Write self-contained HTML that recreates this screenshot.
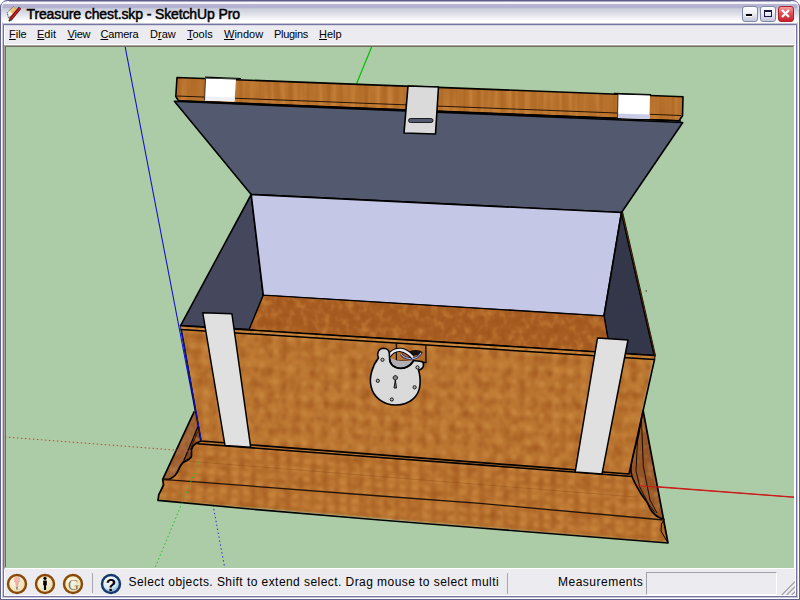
<!DOCTYPE html>
<html><head><meta charset="utf-8">
<style>
html,body{margin:0;padding:0;width:800px;height:600px;overflow:hidden;background:#ffffff;}
*{box-sizing:border-box;}
.a{position:absolute;}
#win{position:absolute;left:0;top:0;width:800px;height:600px;background:#ebebf0;border-radius:8px 8px 0 0;overflow:hidden;}
#title{position:absolute;left:0;top:0;width:800px;height:24px;background:linear-gradient(to bottom,#5e5d8c 0px,#5e5d8c 1px,#a8a7c4 1px,#a8a7c4 2px,#ffffff 2px,#f2f2f7 3px,#f2f2f7 3.5px,#b8b6d3 4px,#b4b2d1 7.5px,#c6c8d8 8.5px,#ccd0dc 9.5px,#e0e1e9 14px,#f6f6f9 19px,#ffffff 21px,#ffffff 23px,#c4c3d6 23px,#c4c3d6 24px);}
#ttext{position:absolute;left:26.5px;top:6px;font:14px "Liberation Sans",sans-serif;color:#000;letter-spacing:-0.12px;-webkit-text-stroke:0.5px #000;white-space:nowrap;}
.btn{position:absolute;top:6px;width:16px;height:16px;border:1px solid #7e88aa;border-radius:3px;
 background:linear-gradient(to bottom,#ffffff 0%,#f0f0f6 40%,#c6c6dc 100%);}
#menu{position:absolute;left:0;top:24px;width:800px;height:21px;}
.mi{position:absolute;top:5px;font:11px "Liberation Sans",sans-serif;color:#000;white-space:nowrap;}
.mi u{text-decoration:underline;text-underline-offset:1px;text-decoration-thickness:1px;}
#status{position:absolute;left:0;top:568px;width:800px;height:32px;}
</style></head>
<body>
<div id="win">
 <div id="title"></div>
 <!-- icon -->
 <svg class="a" style="left:4px;top:3px" width="20" height="20" viewBox="0 0 20 20">
  <path d="M9.5,3.5 L12.5,6.8 L8.8,11.5 L4.5,15 L3.2,9.5 Z" fill="#f2f2f2" stroke="#222" stroke-width="0.8" stroke-dasharray="1 0.6"/>
  <path d="M9.5,3.5 L12.5,6.8 L8.8,11.5 L6.2,8.2 Z" fill="#f4b868"/>
  <path d="M16,4.8 L6.2,16.8" stroke="#202020" stroke-width="3.2"/>
  <path d="M16,4.8 L6.2,16.8" stroke="#ee1010" stroke-width="1.8"/>
  <path d="M6.6,16.3 L5,18.2" stroke="#403020" stroke-width="2"/>
 </svg>
 <div id="ttext">Treasure chest.skp - SketchUp Pro</div>
 <div class="btn" style="left:742px"><div class="a" style="left:3px;top:7px;width:6px;height:2px;background:#000"></div><div class="a" style="left:3px;top:9px;width:6px;height:1px;background:#fff"></div></div>
 <div class="btn" style="left:760px"><div class="a" style="left:3px;top:3px;width:8px;height:7px;border:1px solid #1a1a40;border-top-width:2px;"></div></div>
 <div class="btn" style="left:778px;border-color:#b02028;background:linear-gradient(to bottom,#f4a0a0 0%,#e05058 45%,#c8202c 100%)">
  <svg class="a" style="left:0px;top:0px" width="14" height="14" viewBox="0 0 14 14"><path d="M3 3 L10 10 M10 3 L3 10" stroke="#fff" stroke-width="2.2"/></svg>
 </div>
 <svg class="a" style="left:0;top:0" width="800" height="12" viewBox="0 0 800 12">
  <path d="M0.5,8 Q0.5,0.5 8,0.5" fill="none" stroke="#6a6994" stroke-width="1"/>
  <path d="M1.5,9 Q1.5,1.5 9,1.5" fill="none" stroke="#f4f4f8" stroke-width="1"/>
  <path d="M799.5,8 Q799.5,0.5 792,0.5" fill="none" stroke="#6a6994" stroke-width="1"/>
  <path d="M798.5,9 Q798.5,1.5 791,1.5" fill="none" stroke="#f4f4f8" stroke-width="1"/>
 </svg>
 <!-- frame lines -->
 <div class="a" style="left:0;top:24px;width:800px;height:1px;background:#7574a2"></div>
 <div class="a" style="left:0;top:25px;width:800px;height:1px;background:#d6d6e4"></div>
 <div class="a" style="left:0;top:0;width:1px;height:600px;background:#62608e"></div>
 <div class="a" style="left:1px;top:22px;width:1px;height:578px;background:#fff"></div>
 <div class="a" style="left:2px;top:22px;width:1px;height:578px;background:#c8c8dc"></div>
 <div class="a" style="left:3px;top:24px;width:1px;height:576px;background:#7372a0"></div>
 <div class="a" style="left:4px;top:25px;width:1px;height:571px;background:#fff"></div>
 <div class="a" style="left:799px;top:0;width:1px;height:600px;background:#62608e"></div>
 <div class="a" style="left:798px;top:22px;width:1px;height:578px;background:#fff"></div>
 <div class="a" style="left:797px;top:22px;width:1px;height:578px;background:#c8c8dc"></div>
 <div class="a" style="left:796px;top:24px;width:1px;height:576px;background:#7372a0"></div>
 <div class="a" style="left:795px;top:25px;width:1px;height:571px;background:#fff"></div>
 <div class="a" style="left:0;top:599px;width:800px;height:1px;background:#62608e"></div>
 <div class="a" style="left:1px;top:598px;width:798px;height:1px;background:#fff"></div>
 <div class="a" style="left:2px;top:597px;width:796px;height:1px;background:#c8c8dc"></div>
 <div class="a" style="left:3px;top:596px;width:794px;height:1px;background:#7372a0"></div>
 <div class="a" style="left:4px;top:595px;width:792px;height:1px;background:#fff"></div>

 <!-- menu -->
 <div class="mi" style="left:9px;top:28px"><u>F</u>ile</div>
 <div class="mi" style="left:37px;top:28px"><u>E</u>dit</div>
 <div class="mi" style="left:67.5px;top:28px;letter-spacing:-0.2px"><u>V</u>iew</div>
 <div class="mi" style="left:100.5px;top:28px;letter-spacing:-0.2px"><u>C</u>amera</div>
 <div class="mi" style="left:150px;top:28px">D<u>r</u>aw</div>
 <div class="mi" style="left:187px;top:28px"><u>T</u>ools</div>
 <div class="mi" style="left:224px;top:28px"><u>W</u>indow</div>
 <div class="mi" style="left:274px;top:28px;letter-spacing:-0.3px">Plugins</div>
 <div class="mi" style="left:319px;top:28px"><u>H</u>elp</div>
 <div class="a" style="left:5px;top:44px;width:790px;height:1px;background:#fff"></div>

 <!-- canvas -->
 <div class="a" style="left:4px;top:45px;width:791px;height:524px;background:#fff;border-top:1px solid #a8a49c;border-left:1px solid #a8a49c;border-right:1px solid #fff;border-bottom:1px solid #fff;"></div>
 <div class="a" style="left:5px;top:46px;width:789px;height:522px;border-top:1px solid #736e62;border-left:1px solid #736e62;border-right:1px solid #f0f0f0;border-bottom:1px solid #f0f0f0;"></div>
 <svg class="a" style="left:0;top:0" width="800" height="600" viewBox="0 0 800 600">
  <defs>
   <clipPath id="cv"><rect x="6" y="47" width="788" height="521"/></clipPath>
   <filter id="tx" filterUnits="userSpaceOnUse" x="0" y="0" width="800" height="600" color-interpolation-filters="sRGB">
    <feTurbulence type="fractalNoise" baseFrequency="0.13 0.11" numOctaves="2" seed="7" result="n"/>
    <feColorMatrix in="n" type="matrix" values="0 0 0 0 0.60  0 0 0 0 0.30  0 0 0 0 0.08  -1.6 0 0 0 0.82" result="dk"/>
    <feColorMatrix in="n" type="matrix" values="0 0 0 0 0.82  0 0 0 0 0.55  0 0 0 0 0.25  1.6 0 0 0 -0.80" result="lt"/>
    <feMerge result="m"><feMergeNode in="SourceGraphic"/><feMergeNode in="dk"/><feMergeNode in="lt"/></feMerge>
    <feGaussianBlur in="m" stdDeviation="0.6" result="b"/>
    <feComposite in="b" in2="SourceAlpha" operator="in"/>
   </filter>
   <pattern id="pw" patternUnits="userSpaceOnUse" width="14" height="15" patternTransform="skewY(3.8)">
    <rect width="14" height="15" fill="#b9742f"/>
    <ellipse cx="4" cy="8" rx="2.6" ry="3.5" fill="#a85c24" opacity="0.55"/>
    <ellipse cx="10.5" cy="3" rx="2.6" ry="3.2" fill="#cc8e46" opacity="0.55"/>
    <ellipse cx="10.5" cy="18" rx="2.6" ry="3.2" fill="#cc8e46" opacity="0.55"/>
    <rect x="7" y="0" width="1.4" height="15" fill="#c6883e" opacity="0.35"/>
   </pattern>
   <pattern id="pb" patternUnits="userSpaceOnUse" width="12" height="9" patternTransform="skewY(4.6)">
    <rect width="12" height="9" fill="#b8722e"/>
    <rect x="0" y="0" width="2" height="9" fill="#a45c26" opacity="0.45"/>
    <ellipse cx="7" cy="4.5" rx="3" ry="2.6" fill="#cc8c44" opacity="0.55"/>
    <rect x="0" y="8" width="12" height="1" fill="#a86024" opacity="0.3"/>
   </pattern>
   <filter id="soft" x="-2%" y="-2%" width="104%" height="104%"><feGaussianBlur stdDeviation="0.9"/><feComposite in2="SourceAlpha" operator="in"/></filter>
   <filter id="tx2" filterUnits="userSpaceOnUse" x="0" y="0" width="800" height="600" color-interpolation-filters="sRGB">
    <feTurbulence type="fractalNoise" baseFrequency="0.1 0.09" numOctaves="2" seed="5" result="n"/>
    <feColorMatrix in="n" type="matrix" values="0 0 0 0 0.60  0 0 0 0 0.30  0 0 0 0 0.08  -1.4 0 0 0 0.72" result="dk"/>
    <feColorMatrix in="n" type="matrix" values="0 0 0 0 0.82  0 0 0 0 0.55  0 0 0 0 0.25  1.4 0 0 0 -0.70" result="lt"/>
    <feMerge result="m"><feMergeNode in="SourceGraphic"/><feMergeNode in="dk"/><feMergeNode in="lt"/></feMerge>
    <feGaussianBlur in="m" stdDeviation="1.1" result="b"/>
    <feComposite in="b" in2="SourceAlpha" operator="in"/>
   </filter>
   <filter id="bg" filterUnits="userSpaceOnUse" x="0" y="0" width="800" height="600" color-interpolation-filters="sRGB">
    <feTurbulence type="fractalNoise" baseFrequency="0.13 0.04" numOctaves="2" seed="11" result="n"/>
    <feColorMatrix in="n" type="matrix" values="0 0 0 0 0.62  0 0 0 0 0.32  0 0 0 0 0.08  -1.6 0 0 0 0.82" result="dk"/>
    <feColorMatrix in="n" type="matrix" values="0 0 0 0 0.84  0 0 0 0 0.56  0 0 0 0 0.26  1.6 0 0 0 -0.80" result="lt"/>
    <feMerge result="m"><feMergeNode in="SourceGraphic"/><feMergeNode in="dk"/><feMergeNode in="lt"/></feMerge>
    <feGaussianBlur in="m" stdDeviation="0.7" result="b"/>
    <feComposite in="b" in2="SourceAlpha" operator="in"/>
   </filter>
   <filter id="gr" filterUnits="userSpaceOnUse" x="0" y="0" width="800" height="600" color-interpolation-filters="sRGB">
    <feTurbulence type="fractalNoise" baseFrequency="0.16 0.01" numOctaves="2" seed="3" result="n"/>
    <feColorMatrix in="n" type="matrix" values="0 0 0 0 0.66  0 0 0 0 0.36  0 0 0 0 0.10  -1.8 0 0 0 0.9" result="dk"/>
    <feColorMatrix in="n" type="matrix" values="0 0 0 0 0.86  0 0 0 0 0.58  0 0 0 0 0.28  1.8 0 0 0 -0.9" result="lt"/>
    <feMerge result="m"><feMergeNode in="SourceGraphic"/><feMergeNode in="dk"/><feMergeNode in="lt"/></feMerge>
    <feGaussianBlur in="m" stdDeviation="0.6" result="b"/>
    <feComposite in="b" in2="SourceAlpha" operator="in"/>
   </filter>
  </defs>
  <g clip-path="url(#cv)">
   <rect x="6" y="47" width="788" height="521" fill="#abcca6"/>
      <!-- axes behind model -->
   <line x1="125" y1="46" x2="203" y2="452" stroke="#1010c8" stroke-width="1.05"/>
   <line x1="372" y1="46" x2="356" y2="85" stroke="#00c000" stroke-width="1.2"/>
   <line x1="5" y1="437" x2="200" y2="452" stroke="#d04030" stroke-width="1" stroke-dasharray="1.5 2.5"/>
   <line x1="213" y1="505" x2="227" y2="580" stroke="#3030d0" stroke-width="1" stroke-dasharray="1.5 2.5"/>
   <line x1="637" y1="485" x2="800" y2="497.5" stroke="#cc1818" stroke-width="1"/>
   <!-- base fills -->
   <polygon filter="url(#tx2)" points="194.3,411.3 643,410 668,543 158,500.4 162.7,479.3" fill="url(#pb)"/>
   <polygon filter="url(#tx)" points="194.3,411.3 196.5,411.3 198,426.6 183.7,461 176,473.5 169.4,479.3 162.7,479.3" fill="#a0643a"/>
   <polygon filter="url(#tx)" points="196.5,411.3 201,441 193.3,446 190.5,450.6 191.4,456.3 186.6,461 181.8,464 179,469 176,473.5 183.7,461 198,426.6" fill="#7e4822"/>
   <polygon filter="url(#tx)" points="643,410 668,543 662.5,527.5 664.3,519.6 656,517.2 649,508 648,501 641,494 637.5,484.6 631.7,474 630.5,463.6 637.5,440.3" fill="#94562a"/>
   <!-- base lines -->
   <polyline points="198,426.6 183.7,461 176,473.5" fill="none" stroke="#000" stroke-width="1.2"/>
   <polyline points="197.5,432 190,450" fill="none" stroke="#1a0e04" stroke-width="0.8"/>
   <path d="M201,441 C197,443 193.5,444.5 192.5,447 C190.5,450 192,453.5 191.4,456.3 C190,459.5 187,460.5 184,462 C180.5,464 179.5,467 178.5,470 C177,474 173,477.5 169.4,479.3 L162.7,479.3" fill="none" stroke="#000" stroke-width="1.7"/>
   <path d="M643,410 L637.5,440 C633,452 630,462 631,472 C632,480 637,486 640,492 C643,498 647,500 649,506 C651,512 656,517 664.3,519.6" fill="none" stroke="#000" stroke-width="1.7"/>
   <polyline points="637.5,440.3 636,470.6 639.8,487 648,503 655,512.6" fill="none" stroke="#1a0e04" stroke-width="1"/>
   <polyline points="641.5,420 643.3,466 650,500 657,513" fill="none" stroke="#1a0e04" stroke-width="1"/>
   <polyline points="664.3,519.6 661.5,524 661,531 668,543" fill="none" stroke="#000" stroke-width="1"/>
   <polyline points="194.3,411.3 162.7,479.3 163.6,485 158.8,494.6 158,500.4 250,509 380,520 480,528 668,543 643,410" fill="none" stroke="#000" stroke-width="1.7" stroke-linejoin="round"/>
   <polyline points="162.7,479.3 380,496 480,503.4 664,520" fill="none" stroke="#241408" stroke-width="1.3"/>
   <line x1="186" y1="461" x2="636" y2="497" stroke="#8a4a18" stroke-width="0.8" opacity="0.5"/>
   <!-- front wall -->
   <polygon filter="url(#tx2)" points="180.6,325.6 654.5,355.5 629,474 201,441" fill="url(#pw)"/>
   <polygon points="180.6,325.6 654.5,355.5 654.5,359.5 629,474 201,441" fill="none" stroke="#000" stroke-width="1.6" stroke-linejoin="round"/>
   <polyline points="197.3,443.7 380,457.5 480,464.9 632,476.5" fill="none" stroke="#000" stroke-width="1.6"/>
   <line x1="180.6" y1="327" x2="201.3" y2="441" stroke="#1010c8" stroke-width="1.05"/>
   <!-- axes dotted on top -->
   <line x1="175" y1="450" x2="190" y2="451.2" stroke="#d04030" stroke-width="1" stroke-dasharray="1.5 2.5"/>
   <line x1="199" y1="462" x2="150" y2="580" stroke="#20c020" stroke-width="1" stroke-dasharray="1.5 2.5"/>
   <line x1="637.5" y1="485.6" x2="800" y2="497.8" stroke="#cc1818" stroke-width="1"/>
   <rect x="645.5" y="290.5" width="1.5" height="1" fill="#203020"/>
   <!-- lid underside -->
   <polygon points="174.4,101.25 682.75,122.5 621.5,212.5 251.2,194.5" fill="#535a70" stroke="#000" stroke-width="1.6" stroke-linejoin="round"/>
   <!-- lid wood edge -->
   <polygon filter="url(#gr)" points="177,77.5 683,96.7 682.5,115.8 679,120.8 178.5,100.8 175.8,96.5" fill="#b6712d"/>
   <polygon filter="url(#gr)" points="175.8,96.3 682.5,115.8 679,120.8 178.5,100.8" fill="#bc762e"/>
   <polygon points="177,77.5 683,96.7 682.5,115.8 679,120.8 178.5,100.8 175.8,96.5" fill="none" stroke="#000" stroke-width="1.6" stroke-linejoin="round"/>
   <line x1="177" y1="96" x2="681" y2="115.5" stroke="#2a1606" stroke-width="1"/>
   <line x1="178" y1="101" x2="681" y2="121" stroke="#000" stroke-width="1.6"/>
   <!-- hinges -->
   <polygon points="205.5,78.5 236,79.5 234.5,101.5 204.5,100.5" fill="#ffffff"/>
   <polygon points="204.8,96.5 235,97.5 234.5,101.5 204.5,100.5" fill="#f0f0f8"/>
   <polyline points="205.5,78.5 204.5,100.5 M236,79.5 234.5,101.5" fill="none" stroke="#222" stroke-width="0.9"/>
   <line x1="205" y1="77.2" x2="241" y2="78.5" stroke="#000" stroke-width="1.2"/>
   <polygon points="618,94.5 650,95.5 649.5,119 617.5,118" fill="#ffffff"/>
   <polygon points="617.7,113.5 649.7,114.5 649.5,119 617.5,118" fill="#c8cce8"/>
   <polyline points="618,94.5 617.5,118 M650,95.5 649.5,119" fill="none" stroke="#222" stroke-width="0.9"/>
   <line x1="614" y1="93.3" x2="651" y2="94.5" stroke="#000" stroke-width="1.2"/>
   <!-- left inner wall -->
   <polygon points="251.2,194.5 263.3,295.3 249.3,329.5 180.6,325.6" fill="#45485d" stroke="#000" stroke-width="1.6" stroke-linejoin="round"/>
   <!-- back wall -->
   <polygon points="251.2,194.5 621.5,212.5 604,316 263.3,295.3" fill="#c4c7e5" stroke="#000" stroke-width="1.6" stroke-linejoin="round"/>
   <!-- right inner wall -->
   <polygon points="621.5,212.5 654.5,355.5 610.3,352.7 604,316" fill="#34374a" stroke="#000" stroke-width="1.6" stroke-linejoin="round"/>
   <line x1="622" y1="212.5" x2="655" y2="356.5" stroke="#000" stroke-width="2.3"/>
   <line x1="622.4" y1="213.5" x2="655.2" y2="355.5" stroke="#8a4a1a" stroke-width="0.6"/>
   <!-- floor -->
   <polygon filter="url(#tx)" points="263.3,295.3 604,316 610.3,352.7 249,329.9" fill="#a85e22"/>
   <polygon points="263.3,295.3 604,316 610.3,352.7 249,329.9" fill="none" stroke="#000" stroke-width="1.15" stroke-linejoin="round"/>
   <!-- front wall top strip -->
   <polygon filter="url(#gr)" points="180.6,325.6 654.5,355.5 654.5,359.5 180.6,329.4" fill="#c8843a"/>
   <line x1="180.6" y1="325.6" x2="654.5" y2="355.5" stroke="#000" stroke-width="1.6"/>
   <line x1="180.6" y1="329.4" x2="654.5" y2="359.5" stroke="#000" stroke-width="1.5"/>
   <!-- straps -->
   <polygon points="202.75,312.75 231.9,313.75 250.7,447.3 225,445.5" fill="#e0e0e0" stroke="#000" stroke-width="1.5" stroke-linejoin="round"/>
   <polygon points="597.5,338 628,340 602,473.9 575.2,471.9" fill="#e0e0e0" stroke="#000" stroke-width="1.5" stroke-linejoin="round"/>
   <!-- hasp -->
   <polygon points="408,86 438.5,87 435.5,134 404,133" fill="#dadada" stroke="#000" stroke-width="1.6" stroke-linejoin="round"/>
   <rect x="408.5" y="118.5" width="24.5" height="4" rx="2" fill="#545a72" stroke="#000" stroke-width="0.8"/>
   <!-- padlock receiver -->
   <polyline points="396.4,343.2 396.4,360.8 426,362.5 425.8,345" fill="none" stroke="#140c04" stroke-width="1.3"/>
   <!-- padlock -->
   <path d="M389,357 C392,359.5 398,361 404,361 C409,361 412,360.5 414,360.5 C410,367 403,369.5 397,368 C392,366.5 389.5,362.5 389,357 Z" fill="#b0b0b4"/>
   <ellipse cx="415.5" cy="352.8" rx="7" ry="2.8" fill="#1a1208"/>
   <path d="M401,354 C403,357 407,358.8 412,358.8 C416,358.5 419.5,356 421,352.8" fill="none" stroke="#303058" stroke-width="2.4"/>
   <path d="M401,354 C403,357 407,358.8 412,358.8 C416,358.5 419.5,356 421,352.8" fill="none" stroke="#c0c8ec" stroke-width="1"/>
   <path d="M388.5,356.5 C392,351 397,349.5 401,350 C405,350.5 409,353 413,357.5" fill="none" stroke="#000" stroke-width="4.4"/>
   <path d="M388.5,356.5 C392,351 397,349.5 401,350 C405,350.5 409,353 413,357.5" fill="none" stroke="#ececf0" stroke-width="2.4"/>
   <path d="M383.7,348.2 C378,348.5 376.5,354 378.5,358 C372,366 369,378 371,386 C373,397 383,405 396,405 C410,405 419,396 420,385 C420.5,378 419.5,373 418.5,370 C424,369 425,363 421.5,361.5 L413.5,360.5 C410,367 403,369.5 397,368 C392,366.5 389.5,362.5 389.5,357.5 C390,351 388,348.2 383.7,348.2 Z" fill="#dadada" stroke="#000" stroke-width="1.6"/>
   <path d="M389.5,359 C390,364 394,368 400,368.3 C406,368.5 411,365 413.5,361" fill="none" stroke="#000" stroke-width="1.6"/>
   <g fill="#bdbdbd" stroke="#000" stroke-width="0.9">
    <circle cx="382.5" cy="359.8" r="1.6"/><circle cx="417.5" cy="367.4" r="1.6"/>
    <circle cx="377.8" cy="380.8" r="1.6"/><circle cx="414.6" cy="387.3" r="1.6"/><circle cx="391.8" cy="399.5" r="1.6"/>
   </g>
   <path d="M395.3,380 a2.2,2.2 0 1 1 0.1,0 L396.5,388 L394,388 Z" fill="#888" stroke="#000" stroke-width="0.9"/>

  </g>
 </svg>

 <!-- status bar -->
 <svg class="a" style="left:0;top:570px" width="130" height="28" viewBox="0 570 130 28">
  <defs>
   <radialGradient id="cr" cx="0.4" cy="0.35" r="0.7"><stop offset="0" stop-color="#fffbe8"/><stop offset="1" stop-color="#e8d8a8"/></radialGradient>
   <radialGradient id="hb" cx="0.4" cy="0.3" r="0.75"><stop offset="0" stop-color="#ffffff"/><stop offset="0.6" stop-color="#d8e6f4"/><stop offset="1" stop-color="#6a90c0"/></radialGradient>
  </defs>
  <circle cx="17" cy="584" r="9" fill="url(#cr)" stroke="#8a4806" stroke-width="2.4"/>
  <circle cx="17" cy="580" r="3.2" fill="#f4b8b0"/>
  <path d="M15.2 581.5 L18.8 581.5 L17.8 589.5 L16.2 589.5 Z" fill="#e8b0a8"/>
  <rect x="16" y="587" width="2" height="2.5" fill="#a09890"/>
  <circle cx="45" cy="584" r="9" fill="url(#cr)" stroke="#8a4806" stroke-width="2.4"/>
  <circle cx="45" cy="578.3" r="1.6" fill="#000"/>
  <path d="M43.2 580.5 h3.6 v4.8 h-0.7 v4.6 h-2.2 v-4.6 h-0.7 z" fill="#000"/>
  <circle cx="73" cy="584" r="9" fill="url(#cr)" stroke="#8a4806" stroke-width="2.4"/>
  <text x="73.5" y="589.5" text-anchor="middle" font-family="Liberation Serif" font-size="15" fill="#7a7a6a">G</text>
  <rect x="92" y="573" width="1" height="20" fill="#a8a8b0"/>
  <circle cx="111" cy="584" r="9" fill="url(#hb)" stroke="#15396a" stroke-width="2.4"/>
  <text x="111" y="590.5" text-anchor="middle" font-family="Liberation Sans" font-weight="bold" font-size="17" fill="#000">?</text>
 </svg>
 <div class="a" style="left:128.5px;top:575px;width:370.5px;height:18px;overflow:hidden;font:12px 'Liberation Sans',sans-serif;letter-spacing:0.44px;color:#000;white-space:nowrap;">Select objects. Shift to extend select. Drag mouse to select multiple.</div>
 <div class="a" style="left:507px;top:573px;width:1px;height:21px;background:#a8a8b0"></div>
 <div class="a" style="left:558px;top:575px;font:12px 'Liberation Sans',sans-serif;letter-spacing:0.5px;color:#000;white-space:nowrap;">Measurements</div>
 <div class="a" style="left:646px;top:572px;width:131px;height:23px;border-top:1px solid #a0a0a8;border-left:1px solid #a0a0a8;border-right:1px solid #fff;border-bottom:1px solid #fff;"></div>
 <svg class="a" style="left:780px;top:580px" width="15" height="15" viewBox="0 0 15 15">
  <path d="M15.5 2 L2 15.5 M15.5 7 L7 15.5 M15.5 12 L12 15.5" stroke="#fff" stroke-width="1.2"/>
  <path d="M15 1.8 L1.8 15 M15 6.8 L6.8 15 M15 11.8 L11.8 15" stroke="#a4a4ac" stroke-width="1.4"/>
 </svg>
</div>
</body></html>
